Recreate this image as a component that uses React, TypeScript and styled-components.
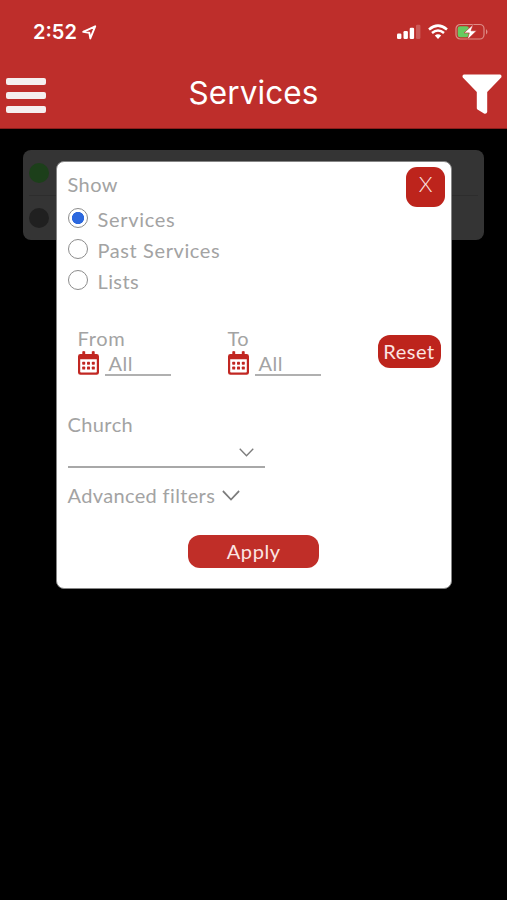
import React, { useState } from "react";
import styled, { createGlobalStyle } from "styled-components";

const GlobalStyle = createGlobalStyle`
  * { box-sizing: border-box; }
  body { margin: 0; background: #000; font-family: "Lato", sans-serif; }
  button { font-family: inherit; border: 0; padding: 0; cursor: pointer; }
`;

const Screen = styled.div`
  position: relative;
  width: 507px;
  height: 900px;
  overflow: hidden;
  background: #000;
`;

const Header = styled.header`
  height: 129px;
  background: #be2e2b;
  border-bottom: 1px solid #8a1d1b;
  color: #fff;
`;

const StatusBar = styled.div`
  display: flex;
  align-items: center;
  justify-content: space-between;
  height: 64px;
  padding: 0 18px 0 33px;
`;

const StatusGroup = styled.div<{ $gap: number }>`
  display: flex;
  align-items: center;
  gap: ${(p) => p.$gap}px;
`;

const Clock = styled.span`
  font: 600 20px/24px "Inter", sans-serif;
  letter-spacing: 0;
`;

const TitleBar = styled.div`
  display: flex;
  align-items: flex-start;
  justify-content: space-between;
  height: 64px;
  padding: 0 5px 0 6px;
`;

const MenuButton = styled.button`
  display: flex;
  flex-direction: column;
  gap: 7px;
  margin-top: 13.5px;
  background: none;
`;

const MenuBar = styled.span`
  width: 40px;
  height: 7px;
  border-radius: 2px;
  background: #f5efef;
`;

const FilterButton = styled.button`
  margin-top: 10px;
  height: 42px;
  background: none;
`;

const Title = styled.h1`
  margin: 9px 1px 0 0;
  font: 400 31.5px/40px "Inter", sans-serif;
  letter-spacing: 0.1px;
`;

const List = styled.section`
  width: 461px;
  height: 90px;
  margin: 21px 0 0 23px;
  padding: 0 6px;
  border-radius: 8px;
  background: #343434;
`;

const ListRow = styled.div`
  display: flex;
  align-items: center;
  height: 45px;
  & + & { border-top: 1px solid #2d2d2d; }
`;

const Dot = styled.span<{ $color: string }>`
  width: 20px;
  height: 20px;
  border-radius: 50%;
  background: ${(p) => p.$color};
`;

const Dialog = styled.section`
  position: absolute;
  left: 56px;
  top: 161px;
  width: 396px;
  height: 428px;
  padding: 10px 11px 0 10.5px;
  border: 1px solid #858585;
  border-radius: 8px;
  background: #fff;
`;

const Label = styled.span<{ $track?: number }>`
  display: block;
  font-size: 20px;
  line-height: 24px;
  font-weight: 400;
  letter-spacing: ${(p) => p.$track ?? 0}px;
  color: #a3a3a3;
  white-space: nowrap;
`;

const TopRow = styled.div`
  display: flex;
  justify-content: space-between;
  height: 34px;
`;

const ActionButton = styled.button<{ $w: number; $h: number; $r: number; $bg?: string; $track?: number }>`
  display: flex;
  align-items: center;
  justify-content: center;
  width: ${(p) => p.$w}px;
  height: ${(p) => p.$h}px;
  padding-bottom: 2px;
  border-radius: ${(p) => p.$r}px;
  background: ${(p) => p.$bg ?? "#bd241c"};
  color: #fbe4e2;
  font-size: 20px;
  line-height: 24px;
  letter-spacing: ${(p) => p.$track ?? 0}px;
`;

const CloseButton = styled(ActionButton)`
  align-items: flex-start;
  margin: -5px -5px 0 0;
  padding-top: 5px;
  font-weight: 300;
  font-size: 22px;
`;

const Options = styled.div`
  display: flex;
  flex-direction: column;
`;

const Option = styled.label`
  display: flex;
  align-items: flex-start;
  gap: 10px;
  height: 31.4px;
`;

const Radio = styled.input`
  appearance: none;
  width: 20px;
  height: 20px;
  margin: 1.5px 0 0;
  border: 1.5px solid #8c8c8c;
  border-radius: 50%;
  background: #fff;
  &:checked {
    background: radial-gradient(circle, #2c68de 5.7px, #fff 6.5px);
  }
`;

const OptionLabel = styled(Label)`
  margin-top: 0.5px;
`;

const DateRow = styled.div`
  display: flex;
  height: 86px;
  margin-top: 26px;
  padding-left: 10px;
`;

const DateField = styled.div`
  width: 150px;
  flex: none;
`;

const DateControl = styled.div`
  display: flex;
  align-items: flex-start;
  gap: 6px;
`;

const DateValue = styled.div`
  width: 66px;
  height: 26px;
  padding: 1px 0 0 4px;
  border-bottom: 2px solid #b0b0b0;
`;

const ResetButton = styled(ActionButton)`
  margin-top: 9px;
  flex: none;
`;

const Select = styled.div`
  display: flex;
  justify-content: flex-end;
  width: 197px;
  height: 32px;
  padding: 12px 11px 0 0;
  border-bottom: 2px solid #a8a8a8;
`;

const Advanced = styled.div`
  display: flex;
  align-items: center;
  gap: 7px;
  margin-top: 15px;
`;

const Footer = styled.div`
  display: flex;
  justify-content: center;
  margin: 28px 0 0 0;
`;

const LocationIcon = () => (
  <svg width="15" height="15" viewBox="0 0 15 15">
    <path d="M1.2 6.8 13.2 1.3 8.3 13.4 7.3 7.7Z" fill="none" stroke="#fff" strokeWidth="1.9" strokeLinejoin="round" />
  </svg>
);

const SignalIcon = () => (
  <svg width="24" height="16" viewBox="0 0 24 16" fill="#fff">
    <rect x="0" y="9.5" width="4.4" height="5.5" rx="1.2" />
    <rect x="6.5" y="7" width="4.4" height="8" rx="1.2" />
    <rect x="12.7" y="3.7" width="4.4" height="11.3" rx="1.2" />
    <rect x="19" y="0.8" width="4.4" height="14.2" rx="1.2" opacity=".22" />
  </svg>
);

const WifiIcon = () => (
  <svg width="20" height="16" viewBox="0 0 20 16" fill="none" stroke="#fff" strokeWidth="2.5">
    <path d="M1 5.5Q10-2.2 19 5.5M4 9Q10 4 16 9" />
    <path d="M6.8 11.6Q10 9 13.2 11.6L10 14.9Z" fill="#fff" stroke="none" />
  </svg>
);

const BatteryIcon = () => (
  <svg width="34" height="18" viewBox="0 0 34 18">
    <rect x="1" y="1.5" width="28" height="14.5" rx="4.2" fill="none" stroke="#dd8c86" strokeWidth="1.2" />
    <path d="M31 6q3 2.8 0 5.6Z" fill="#dd8c86" />
    <rect x="2.7" y="3.2" width="11.2" height="11.1" rx="2.4" fill="#66ca60" />
    <path d="M18.3 1.4 9 9.9h5.3l-2 6.8 9.3-8.9H16Z" fill="#fff" stroke="#be2e2b" strokeWidth="0.6" />
  </svg>
);

const FilterIcon = () => (
  <svg width="40" height="42" viewBox="0 0 40 42">
    <path d="M2 .5H38Q40.2 1 39.2 3.5L25.2 18V38Q24.6 40.2 22 39.5L15.5 35.5Q14.8 35 14.8 34V18L.8 3.5Q-.2 1 2 .5Z" fill="#fff" />
  </svg>
);

const CalendarIcon = () => (
  <svg width="21" height="25" viewBox="0 0 21 25">
    <path
      fill="#c12722"
      fillRule="evenodd"
      d="M4.3 1.6Q5.8.5 7.2 1.6V4H13.8V1.6Q15.3.5 16.7 1.6V4H18.6Q21 4 21 6.4V22.4Q21 24.8 18.6 24.8H2.4Q0 24.8 0 22.4V6.4Q0 4 2.4 4H4.3ZM2.2 9.3V21.8Q2.2 22.6 3 22.6H18Q18.8 22.6 18.8 21.8V9.3Z"
    />
    <g fill="#c12722">
      {[11.7, 16.6].map((y) =>
        [4.2, 9, 13.8].map((x) => <rect key={`${x}-${y}`} x={x} y={y} width="3" height="3" rx=".7" />),
      )}
    </g>
  </svg>
);

const Chevron = ({ width, height }: { width: number; height: number }) => (
  <svg width={width} height={height} viewBox="0 0 16 9" preserveAspectRatio="none" fill="none" stroke="#7c7c7c" strokeWidth="1.5">
    <path d="m.8.8 7.2 7 7.2-7" />
  </svg>
);

const options = [
  { name: "Services", track: 0.7 },
  { name: "Past Services", track: 0.6 },
  { name: "Lists", track: 0.4 },
];

export default function App() {
  const [shown, setShown] = useState("Services");
  return (
    <Screen>
      <GlobalStyle />
      <Header>
        <StatusBar>
          <StatusGroup $gap={5}>
            <Clock>2:52</Clock>
            <LocationIcon />
          </StatusGroup>
          <StatusGroup $gap={7}>
            <SignalIcon />
            <WifiIcon />
            <BatteryIcon />
          </StatusGroup>
        </StatusBar>
        <TitleBar>
          <MenuButton aria-label="Menu">
            <MenuBar />
            <MenuBar />
            <MenuBar />
          </MenuButton>
          <Title>Services</Title>
          <FilterButton aria-label="Filter">
            <FilterIcon />
          </FilterButton>
        </TitleBar>
      </Header>
      <List>
        <ListRow><Dot $color="#1c3f1a" /></ListRow>
        <ListRow><Dot $color="#202020" /></ListRow>
      </List>
      <Dialog role="dialog">
        <TopRow>
          <Label $track={0.4}>Show</Label>
          <CloseButton $w={39} $h={40} $r={11}>X</CloseButton>
        </TopRow>
        <Options>
          {options.map((o) => (
            <Option key={o.name}>
              <Radio type="radio" name="show" checked={shown === o.name} onChange={() => setShown(o.name)} />
              <OptionLabel $track={o.track}>{o.name}</OptionLabel>
            </Option>
          ))}
        </Options>
        <DateRow>
          <DateField>
            <Label $track={0.7}>From</Label>
            <DateControl>
              <CalendarIcon />
              <DateValue><Label $track={0.5}>All</Label></DateValue>
            </DateControl>
          </DateField>
          <DateField>
            <Label $track={0.5}>To</Label>
            <DateControl>
              <CalendarIcon />
              <DateValue><Label $track={0.5}>All</Label></DateValue>
            </DateControl>
          </DateField>
          <ResetButton $w={63} $h={33} $r={12} $track={0.5}>Reset</ResetButton>
        </DateRow>
        <Label $track={0.4}>Church</Label>
        <Select>
          <Chevron width={15} height={9} />
        </Select>
        <Advanced>
          <Label $track={0.35}>Advanced filters</Label>
          <Chevron width={18} height={11} />
        </Advanced>
        <Footer>
          <ActionButton $w={131} $h={33} $r={12} $bg="#c02e28" $track={0.6}>Apply</ActionButton>
        </Footer>
      </Dialog>
    </Screen>
  );
}
